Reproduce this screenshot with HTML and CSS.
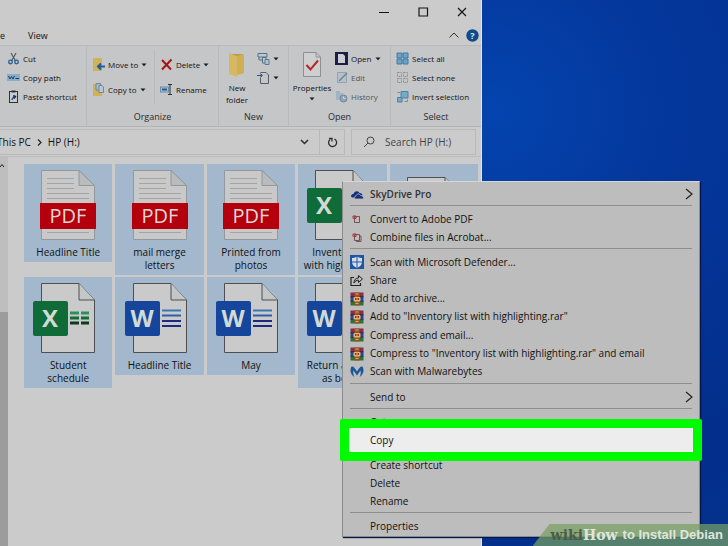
FILE: index.html
```html
<!DOCTYPE html>
<html lang="en">
<head>
<meta charset="utf-8">
<title>HP (H:)</title>
<link rel="stylesheet" href="styles.css">
</head>
<body>
<svg class="defs" aria-hidden="true">
  <symbol id="page" viewBox="0 0 72 70">
    <path d="M9.5.5H47L62.500 17V69.500H9.500Z" fill="#cacaca" stroke="#4c5054"/>
    <path d="M47 .5V17H62.500" fill="#c4c6c8" stroke="#4c5054"/>
  </symbol>
  <symbol id="pdf" viewBox="0 0 72 70">
    <path d="M9.500.5H47L62.500 15.500V69.500H9.500Z" fill="#c9c9c9" stroke="#92989d"/>
    <path d="M47 .5V15.500H62.500Z" fill="#b9bbbc" stroke="#92989d"/>
    <path d="M15 8.500H42M15 13.500H42M15 18.500H42M15 23.500H57M15 28.500H57M15 62.500H57" stroke="#a2a4a6"/>
    <rect x="8" y="33" width="56" height="26" fill="#b3000c"/>
  </symbol>
  <symbol id="xls" viewBox="0 0 72 70">
    <use href="#page"/>
    <path d="M38 30H47M49 30H57" stroke="#2c8f5c" stroke-width="3"/>
    <path d="M38 35H47M49 35H57" stroke="#17683a" stroke-width="3"/>
    <path d="M38 40H47M49 40H57" stroke="#0c3a20" stroke-width="3"/>
    <rect x="1" y="18" width="35" height="35" rx="2" fill="#0f6b37"/>
  </symbol>
  <symbol id="doc" viewBox="0 0 72 70">
    <use href="#page"/>
    <path d="M38 27.500H57" stroke="#3b79b4" stroke-width="2"/>
    <path d="M38 32.500H57" stroke="#2c5fa8" stroke-width="2"/>
    <path d="M38 38H57M38 43H57" stroke="#1c2a80" stroke-width="2"/>
    <rect x="1" y="18" width="35" height="35" rx="2" fill="#16459c"/>
  </symbol>
  <symbol id="rar" viewBox="0 0 14 14">
    <rect x=".5" y=".5" width="13" height="4.500" fill="#8a2a4c"/>
    <rect x=".5" y="5" width="13" height="4.500" fill="#27479a"/>
    <rect x=".5" y="9.500" width="13" height="4" fill="#2d7135"/>
    <path d="M.5 4.800H13.500M.5 9.300H13.500" stroke="#26202c" stroke-width=".8"/>
    <rect x="4.500" y=".5" width="5" height="13" fill="#9a5327"/>
    <rect x="3.500" y="5" width="7" height="4.500" rx="1" fill="#dcb96a"/>
    <path d="M5.500 8V6L7 7.500 8.500 6V8" fill="none" stroke="#a3282b"/>
    <path d="M5.500 2H8.500M5.500 11.500H8.500" stroke="#e0a860"/>
  </symbol>
  <symbol id="acro" viewBox="0 0 14 14">
    <path d="M4.500 4.500H9.500V10.500H4.500Z" fill="#c9b9b9" stroke="#6c5558"/>
    <path d="M3 6.500V4H6V6.500H3.500" fill="none" stroke="#b02a36"/>
  </symbol>
  <symbol id="caret" viewBox="0 0 6 4"><path d="M.5.5H5.500L3 3.300Z" fill="#181818"/></symbol>
</svg>

<main class="desktop">
  <section class="window" aria-label="File Explorer">
    <header class="titlebar">
      <button aria-label="Minimize"><svg width="12" height="12"><path d="M1 6.500H11" stroke="#161616"/></svg></button>
      <button aria-label="Maximize"><svg width="12" height="12"><path d="M2 2H10.500V10H2Z" fill="none" stroke="#161616" stroke-width="1.200"/></svg></button>
      <button aria-label="Close"><svg width="12" height="12"><path d="M2 2L10 10M10 2L2 10" stroke="#161616" stroke-width="1.200"/></svg></button>
    </header>
    <nav class="tabs">
      <button>e</button>
      <button>View</button>
      <span class="spacer"></span>
      <button aria-label="Collapse ribbon"><svg width="12" height="12"><path d="M1.500 8.500L6 4L10.500 8.500" fill="none" stroke="#333"/></svg></button>
      <button aria-label="Help"><svg width="13" height="13"><circle cx="6.500" cy="6.500" r="6.200" fill="#0f4a8c"/><text x="6.500" y="10" text-anchor="middle" class="help-mark">?</text></svg></button>
    </nav>

    <div class="ribbon">
      <div class="group clip">
        <div class="stack">
          <button><svg width="13" height="13"><path d="M4 1L8.500 9M9 1L4.500 9" stroke="#555c66" stroke-width="1.200"/><circle cx="3.500" cy="10" r="1.800" fill="none" stroke="#255e94" stroke-width="1.300"/><circle cx="9.500" cy="10" r="1.800" fill="none" stroke="#255e94" stroke-width="1.300"/></svg>Cut</button>
          <button><svg width="13" height="13"><rect x="0" y="3" width="13" height="7" fill="#86aeca"/><path d="M1.500 5L3 8L4.500 5.500L6 8L7.500 5" fill="none" stroke="#1d3c60"/><path d="M8.500 7.500H12" stroke="#1d3c60"/></svg>Copy path</button>
          <button><svg width="13" height="13"><rect x="2.500" y="1.500" width="8" height="11" fill="#c6cbd0" stroke="#2d3036"/><path d="M4.500 1.500H8.500" stroke="#2d3036" stroke-width="2"/><path d="M5 10C5 8 6 7 8.500 6.500M6.500 5.500L9 6.300L7.500 8.500Z" fill="#1e3158" stroke="#1e3158"/></svg>Paste shortcut</button>
        </div>
      </div>
      <div class="group organize">
        <div class="pair">
          <div class="stack wide">
            <button><svg width="13" height="13"><path d="M1 0H10V13H1Z" fill="#d0b25c"/><path d="M13 8.500H6M9 5.500L6 8.500L9 11.500" fill="none" stroke="#1c5f94" stroke-width="2"/></svg>Move to<svg class="caret"><use href="#caret"/></svg></button>
            <button><svg width="13" height="13"><path d="M1 1H10V13H1Z" fill="#d0b25c"/><path d="M4 .5H8.500V7H4Z" fill="#a9bac8" stroke="#70879a"/><path d="M7 2.500H10L11.500 4V9.500H7Z" fill="#b9c8d4" stroke="#70879a"/></svg>Copy to<svg class="caret"><use href="#caret"/></svg></button>
          </div>
          <div class="stack wide ruled">
            <button><svg width="13" height="13"><path d="M2 2L11 11.500M11.500 1.500L2 11.500" stroke="#a61419" stroke-width="2"/></svg>Delete<svg class="caret"><use href="#caret"/></svg></button>
            <button><svg width="13" height="13"><rect x=".5" y="4" width="8" height="5" fill="#a9bfd2" stroke="#6f8ca5"/><path d="M2 6.500H7" stroke="#1c5a94" stroke-width="2"/><path d="M8 1.500H12M10 1.500V11.500M8 11.500H12" stroke="#2b2f34"/></svg>Rename</button>
          </div>
        </div>
        <p>Organize</p>
      </div>
      <div class="group new">
        <div class="pair">
          <button class="tall"><svg width="18" height="26"><path d="M2 2H14V22H2Z" fill="#b99a45"/><path d="M1 1L9 4V25L1 22Z" fill="#d6b862"/><path d="M9 4L16 2V21L9 23Z" fill="#cfae55"/></svg>New<br>folder</button>
          <div class="stack icons">
            <button aria-label="New item"><svg width="13" height="13"><path d="M1 1.500H10V5H1ZM2 5V8H5M5.500 5.500H9V11H5.500Z" fill="none" stroke="#52718c"/><path d="M8 7.500H12V12.500H8Z" fill="#b3c0cb" stroke="#60788c"/></svg><svg class="caret"><use href="#caret"/></svg></button>
            <button aria-label="Easy access"><svg width="13" height="13"><path d="M3.500 1.500H9L11.500 4V12.500H3.500V7" fill="none" stroke="#555c64"/><path d="M0 4.500H5M3 2.500L5.500 4.500L3 6.500" fill="none" stroke="#2c5378"/></svg><svg class="caret"><use href="#caret"/></svg></button>
          </div>
        </div>
        <p>New</p>
      </div>
      <div class="group open">
        <div class="pair">
          <button class="tall"><svg width="18" height="26"><path d="M.5.5H13L17.500 5V24.500H.5Z" fill="#cfcfcf" stroke="#8d9195"/><path d="M13 .5V5H17.500" fill="none" stroke="#8d9195"/><path d="M3.500 13L7.500 17.500L15 8.500" fill="none" stroke="#b5282a" stroke-width="2"/></svg>Properties<svg class="caret"><use href="#caret"/></svg></button>
          <div class="stack">
            <button><svg width="13" height="13"><path d="M1 1H12V12H1Z" fill="#1e1d4a" stroke="#1e1d4a" stroke-width="2"/><path d="M3 2H8L10 4V11H3Z" fill="#cbced2"/></svg>Open<svg class="caret"><use href="#caret"/></svg></button>
            <button class="dim"><svg width="13" height="13"><path d="M2.500 1.500H11.500V11.500H2.500Z" fill="#b4c1cc" stroke="#92a3b2"/><path d="M4 10L12 2" stroke="#6f8496" stroke-width="1.500"/></svg>Edit</button>
            <button class="dim"><svg width="13" height="13"><path d="M1 1H5V3H8V10H1Z" fill="#a3b3c0"/><circle cx="8.500" cy="8.500" r="3.500" fill="#8fa6b9" stroke="#6f8799"/><path d="M8.500 6.500V8.500H10.500" fill="none" stroke="#d0d5d9"/></svg>History</button>
          </div>
        </div>
        <p>Open</p>
      </div>
      <div class="group select">
        <div class="stack">
          <button><svg width="13" height="13"><path d="M1 1H6V6H1ZM7 1H12V6H7ZM1 7H6V12H1ZM7 7H12V12H7Z" fill="#6fa3c6" stroke="#3f7ca6"/></svg>Select all</button>
          <button><svg width="13" height="13"><path d="M1.500 1.500H5.500V5.500H1.500ZM7.500 1.500H11.500V5.500H7.500ZM1.500 7.500H5.500V11.500H1.500ZM7.500 7.500H11.500V11.500H7.500Z" fill="none" stroke="#8b9096" stroke-dasharray="2 1"/></svg>Select none</button>
          <button><svg width="13" height="13"><path d="M1.500 7.500H6V12H1.500ZM5 1.500H12V8H5Z" fill="#79a9c8" stroke="#4a82a8"/><path d="M1.500 2.500H4M8.500 11.500H11.500V9.500" fill="none" stroke="#81878c"/></svg>Invert selection</button>
        </div>
        <p>Select</p>
      </div>
    </div>

    <div class="location">
      <div class="address">
        <span>This PC</span>
        <svg width="5" height="7"><path d="M1 .5L4 3.500L1 6.500" fill="none" stroke="#222" stroke-width="1.200"/></svg>
        <span>HP (H:)</span>
        <button class="drop" aria-label="Previous locations"><svg width="9" height="6"><path d="M1 1L4.500 4.500L8 1" fill="none" stroke="#2c2c2c" stroke-width="1.500"/></svg></button>
        <button class="reload" aria-label="Refresh"><svg width="11" height="11"><path d="M3 2.500A4 4 0 1 0 7.500 2" fill="none" stroke="#2c2c2c" stroke-width="1.300"/><path d="M2 1.500H5V4.500" fill="none" stroke="#2c2c2c" stroke-width="1.300"/></svg></button>
      </div>
      <label class="search">
        <svg width="12" height="12"><circle cx="7.500" cy="4.500" r="3.500" fill="none" stroke="#444"/><path d="M5 7L1 11" stroke="#444"/></svg>
        <input type="text" placeholder="Search HP (H:)" aria-label="Search HP (H:)">
      </label>
    </div>

    <div class="content">
      <div class="scroll"><svg width="6" height="5"><path d="M0 4L2 1.500L4 4" fill="none" stroke="#222"/></svg><div class="thumb"></div></div>
      <div class="files">
        <button><svg viewBox="0 0 72 70"><use href="#pdf"/><text x="36" y="53" class="pdf-word">PDF</text></svg>Headline Title</button>
        <button><svg viewBox="0 0 72 70"><use href="#pdf"/><text x="36" y="53" class="pdf-word">PDF</text></svg>mail merge<br>letters</button>
        <button><svg viewBox="0 0 72 70"><use href="#pdf"/><text x="36" y="53" class="pdf-word">PDF</text></svg>Printed from<br>photos</button>
        <button><svg viewBox="0 0 72 70"><use href="#xls"/><text x="18" y="44" class="badge">X</text></svg>Inventory list<br>with highlighting</button>
        <button aria-label="Document"><svg viewBox="0 0 72 70"><use href="#page"/></svg></button>
        <button><svg viewBox="0 0 72 70"><use href="#xls"/><text x="18" y="44" class="badge">X</text></svg>Student<br>schedule</button>
        <button><svg viewBox="0 0 72 70"><use href="#doc"/><text x="18" y="44" class="badge">W</text></svg>Headline Title</button>
        <button><svg viewBox="0 0 72 70"><use href="#doc"/><text x="18" y="44" class="badge">W</text></svg>May</button>
        <button><svg viewBox="0 0 72 70"><use href="#doc"/><text x="18" y="44" class="badge">W</text></svg>Return address<br>as below</button>
      </div>
    </div>
  </section>

  <div class="menu" role="menu">
    <button class="strong" role="menuitem"><svg width="14" height="14"><path d="M1 9.500C1 7.500 2.500 7 3.500 7C4 4 8 3 9.500 6C12 6 12.500 8 12.500 8L9 10.500H2Z" fill="#17307f"/><path d="M5 12C3.500 11 4.500 9 6 9C6.500 6.500 10 6.500 10.500 8.500C13 8 14.500 11.500 12.500 12Z" fill="#17307f" stroke="#bdbdbd" stroke-width=".8"/></svg>SkyDrive Pro<svg class="more" width="8" height="12"><path d="M1 1L7 6L1 11" fill="none" stroke="#222" stroke-width="1.200"/></svg></button>
    <hr>
    <button role="menuitem"><svg width="14" height="14"><use href="#acro"/></svg>Convert to Adobe PDF</button>
    <button role="menuitem"><svg width="14" height="14"><path d="M6.500 6H11V11.500H6.500Z" fill="#c9b9b9" stroke="#6c5558"/><use href="#acro"/></svg>Combine files in Acrobat...</button>
    <hr>
    <div class="apps">
      <button role="menuitem"><svg width="14" height="14"><rect width="14" height="14" fill="#1b57a8"/><path d="M7 1.500C9 2.800 10.500 3 12 3V7C12 10 9.500 12 7 13C4.500 12 2 10 2 7V3C3.500 3 5 2.800 7 1.500Z" fill="#d8dde4"/><path d="M7 1V13M2 7H12" stroke="#1b57a8"/></svg>Scan with Microsoft Defender...</button>
      <button role="menuitem"><svg width="14" height="14"><path d="M4 4.500H1V12.500H10.500V10" fill="none" stroke="#222" stroke-width="1.200"/><path d="M4 10C4 6.500 6 5 8.500 5V2.500L12.500 6L8.500 9.500V7.200C6.500 7.200 5 8 4 10Z" fill="none" stroke="#222"/></svg>Share</button>
      <button role="menuitem"><svg width="14" height="14"><use href="#rar"/></svg>Add to archive...</button>
      <button role="menuitem"><svg width="14" height="14"><use href="#rar"/></svg>Add to "Inventory list with highlighting.rar"</button>
      <button role="menuitem"><svg width="14" height="14"><use href="#rar"/></svg>Compress and email...</button>
      <button role="menuitem"><svg width="14" height="14"><use href="#rar"/></svg>Compress to "Inventory list with highlighting.rar" and email</button>
      <button role="menuitem"><svg width="14" height="14"><path d="M1.500 1.500C-.5 5 .5 9.500 4.500 12C2.500 8.500 3.500 6 3.500 5.500L7 10.500L10.500 5.500C10.500 6 11.500 8.500 9.500 12C13.500 9.500 14.500 5 12.500 1.500C10.500 1 9.500 2.500 7 6.500C4.500 2.500 3.500 1 1.500 1.500Z" fill="#1b5796"/></svg>Scan with Malwarebytes</button>
    </div>
    <hr>
    <button role="menuitem">Send to<svg class="more" width="8" height="12"><path d="M1 1L7 6L1 11" fill="none" stroke="#222" stroke-width="1.200"/></svg></button>
    <hr>
    <button role="menuitem">Cut</button>
    <button class="current" role="menuitem">Copy</button>
    <hr>
    <button role="menuitem">Create shortcut</button>
    <button role="menuitem">Delete</button>
    <button role="menuitem">Rename</button>
    <hr>
    <button role="menuitem">Properties</button>
  </div>

  <footer class="caption"><span class="wiki">wiki</span><span class="how">How</span><span class="title">to Install Debian</span></footer>
</main>
</body>
</html>
```
FILE: styles.css
```css
* { box-sizing: border-box; }

body {
  margin: 0;
  color: #111;
  font: 10px/13px "Open Sans", "Noto Sans", sans-serif;
}

button {
  margin: 0;
  padding: 0;
  border: 0;
  background: none;
  color: inherit;
  font: inherit;
}

svg { flex: none; }
.defs { position: absolute; width: 0; height: 0; }

.desktop {
  position: relative;
  min-height: 100vh;
  display: flex;
  overflow: hidden;
  background: radial-gradient(circle at 68% 20%, #0444ae 0%, #04379c 26%, #032e8b 60%, #033a90 100%);
}

.window {
  width: 66%;
  min-width: 482px;
  display: flex;
  flex-direction: column;
  background: #cbcbcb;
  border-right: 1px solid #dfe6ee;
}

.titlebar {
  display: flex;
  justify-content: flex-end;
  gap: 27px;
  padding: 6px 13px 7px 0;
}
.titlebar svg, .tabs svg, .address svg { display: block; }

.tabs {
  display: flex;
  align-items: center;
  height: 20px;
  padding-right: 2px;
  gap: 6px;
  font-size: 9px;
}
.tabs button:nth-child(2) { margin-left: 17px; }
.spacer { flex: 1; }
.help-mark { fill: #dde6f0; font: bold 9px "Open Sans", sans-serif; }

.ribbon {
  display: flex;
  height: 82px;
  background: #c5c6c7;
  border-top: 1px solid #b6b8ba;
  border-bottom: 1px solid #b2b4b6;
  font-size: 8px;
  line-height: 12px;
}
.group {
  display: flex;
  flex-direction: column;
  justify-content: space-between;
  padding: 4px 0 3px;
  border-right: 1px solid #b8babc;
}
.group p { margin: 0; text-align: center; color: #2c2c2c; font-size: 9px; }
.clip { width: 87px; padding-left: 7px; }
.organize { width: 132px; }
.new { width: 70px; }
.open { width: 102px; }
.select { flex: 1; padding-left: 5px; border-right: 0; }
.select p { padding-right: 5px; }
.pair { display: flex; }

.stack { display: flex; flex-direction: column; gap: 6px; padding-top: 2px; }
.stack button { display: flex; align-items: center; gap: 3px; height: 13px; white-space: nowrap; }
.wide { width: 67px; gap: 12px; padding: 8px 0 8px 5px; }
.wide.ruled { width: auto; border-left: 1px solid #b8babc; }
.caret { width: 6px; height: 4px; }
.dim { color: #555; }

.tall {
  display: flex;
  flex-direction: column;
  align-items: center;
  padding-top: 2px;
}
.tall .caret { margin-top: 3px; }
.tall > svg:first-child { margin-bottom: 4px; }
.new .tall { display: block; width: 36px; }
.new .tall > svg { display: block; margin: 0 auto 4px; }
.open .tall { width: 46px; }
.icons { padding-left: 2px; }

.location {
  display: flex;
  gap: 6px;
  padding: 2px 5px 1px 0;
}
.address, .search {
  display: flex;
  align-items: center;
  height: 26px;
  border: 1px solid #b9b9b9;
}
.address { flex: 1; gap: 6px; border-left: 0; }
.address span:first-child { margin-left: -3px; }
.drop { margin-left: auto; padding-right: 4px; }
.reload { display: grid; place-items: center; width: 25px; height: 24px; border-left: 1px solid #b9b9b9; }
.search { width: 125px; gap: 10px; padding-left: 11px; }
.search input {
  width: 90px;
  padding: 0;
  border: 0;
  background: none;
  font: inherit;
}
.search input::placeholder { color: #444; opacity: 1; }

.content { flex: 1; display: flex; border-top: 1px solid #bdbdbd; }
.scroll {
  width: 8px;
  display: flex;
  flex-direction: column;
  justify-content: space-between;
  padding-top: 6px;
  background: #bebebe;
}
.thumb { height: 61%; background: #9c9c9c; }

.files {
  flex: 1;
  display: grid;
  grid-template-columns: repeat(5, 1fr);
  align-content: start;
  align-items: start;
  gap: 2px 3px;
  padding: 7px 3px 0 16px;
}
.files button {
  min-width: 0;
  min-height: 98px;
  padding: 6px 0 3px;
  background: #a3b8cc;
  white-space: nowrap;
}
.files svg { display: block; width: 72px; height: 70px; margin: 0 auto 6px; }
.files text { text-anchor: middle; }
.pdf-word { fill: #e4d6d8; font: 500 20px "Open Sans", sans-serif; }
.badge { fill: #d2dad6; font: bold 24px "Open Sans", sans-serif; }

.menu {
  position: absolute;
  top: 181px;
  left: 342px;
  right: 28px;
  display: flex;
  flex-direction: column;
  padding: 3px 0 1px;
  background: #bdbdbd;
  border: 1px solid #8b8b8b;
  border-top-color: #d6d6d6;
  box-shadow: 1px 1px 1px #02184e;
}
.menu button {
  position: relative;
  display: flex;
  align-items: center;
  min-height: 18px;
  padding: 0 6px 0 27px;
  white-space: nowrap;
}
.menu button > svg:first-child:not(.more) { margin: 0 6px 0 -20px; }
.menu .more { margin-left: auto; }
.menu hr {
  width: calc(100% - 14px);
  height: 1px;
  margin: 2px auto 4px;
  border: 0;
  background: #8e8e8e;
}
.apps { display: grid; grid-auto-rows: 1fr; min-height: 128px; }
.strong { font-weight: 600; color: #333; }
.menu .current { z-index: 1; }
.current::before {
  content: "";
  position: absolute;
  z-index: -1;
  inset: -12px -3px;
  border: 9px solid #00fb00;
  border-radius: 2px;
  background: #ededed;
}

.caption {
  position: absolute;
  right: 0;
  bottom: 0;
  z-index: 2;
  display: flex;
  align-items: center;
  height: 22px;
  padding: 0 5px 0 18px;
  background: rgba(118, 160, 98, 0.72);
  clip-path: polygon(17px 0, 100% 0, 100% 100%, 0 100%);
  color: #dfe6df;
  font: bold 13px/22px "Liberation Sans", sans-serif;
}
.wiki, .how { font: bold 14px/22px "DejaVu Serif", serif; }
.wiki { color: #4b5b45; }
.title { margin-left: 5px; }
```
